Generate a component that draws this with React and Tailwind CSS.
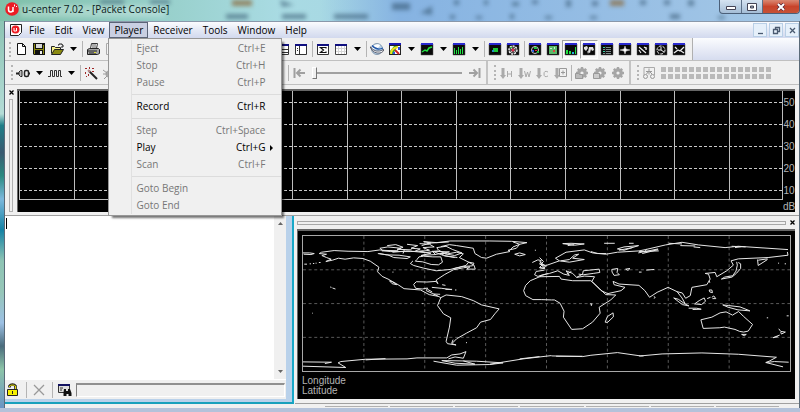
import { useState } from 'react';
import clsx from 'clsx';

const playerMenu = [
  [
    { label: 'Eject', keys: 'Ctrl+E' },
    { label: 'Stop', keys: 'Ctrl+H' },
    { label: 'Pause', keys: 'Ctrl+P' },
  ],
  [{ label: 'Record', keys: 'Ctrl+R', enabled: true }],
  [
    { label: 'Step', keys: 'Ctrl+Space' },
    { label: 'Play', keys: 'Ctrl+G', enabled: true, submenu: true },
    { label: 'Scan', keys: 'Ctrl+F' },
  ],
  [{ label: 'Goto Begin' }, { label: 'Goto End' }],
];

const menus = ['File', 'Edit', 'View', 'Player', 'Receiver', 'Tools', 'Window', 'Help'];

// every toolbar glyph is drawn on a 14x14 grid
const glyphs = {
  new: <path d="M3.5 1.5h5l3 3v8h-8zM8.5 1.5v3h3" fill="#fff" stroke="#111" />,
  save: (
    <>
      <path d="M1 1h12v12H2l-1-1z" fill="#111" />
      <path d="M2 2h1v10H2zM11 3h1v9h-1zM3 7h8v1H3z" fill="#8a8a10" />
      <path d="M4 2h6v4H4z" fill="#d8d8d8" />
      <path d="M8 9h2v3H8z" fill="#eee" />
    </>
  ),
  open: (
    <>
      <path d="M1.5 11.5v-7h3l1 1h5v2" fill="#f5f08a" stroke="#222" />
      <path d="M1.5 12.5l3-5h9l-3 5z" fill="#8a8a10" stroke="#222" />
      <path d="M8 3h1V2h3v1h1v2h-2" fill="none" stroke="#222" />
    </>
  ),
  print: (
    <>
      <path d="M4.5 6.5l1-5h6l-1 5" fill="#fff" stroke="#333" />
      <path d="M6 3h4M6 5h4" stroke="#555" />
      <path d="M1.5 7.5l2-1h9l1 1v4l-2 1h-10z" fill="#a5a5a5" stroke="#222" />
      <path d="M2 9h9M3 11h7" stroke="#222" />
      <path d="M8 10h2v1H8z" fill="#dede30" />
    </>
  ),
  preview: <path d="M2.5 1.5h8v11h-8z" fill="#f4f4f4" stroke="#aaa" />,
  rows: (
    <>
      <path d="M1.5 2.5h11v10h-11z" fill="#fff" stroke="#333" />
      <path d="M1 2h12v2H1z" fill="#101080" />
      <path d="M2 7.5h10M2 10.5h10" stroke="#333" />
    </>
  ),
  split: (
    <>
      <path d="M1.5 2.5h11v10h-11z" fill="#fff" stroke="#333" />
      <path d="M1 2h12v2H1z" fill="#101080" />
      <path d="M5.5 4v8M3 6.5h1M3 8.5h1" stroke="#333" />
    </>
  ),
  sigma: (
    <>
      <path d="M1.5 2.5h11v10h-11z" fill="#fff" stroke="#333" />
      <path d="M1 2h12v2H1z" fill="#101080" />
      <path d="M10 6.500V5.500H4.500L7.500 8 4.500 10.500H10V9.500" fill="none" stroke="#111" strokeWidth="1.200" />
    </>
  ),
  table: (
    <>
      <path d="M1.500 2.500h11v10h-11z" fill="#fff" stroke="#444" />
      <path d="M1 2h12v2H1z" fill="#101080" />
      <path d="M4.500 4v8M7.500 4v8M10.500 4v8M2 6.500h10M2 9.500h10" stroke="#d5d5d5" />
    </>
  ),
  globe: (
    <>
      <circle cx="7" cy="7" r="5.500" fill="#b9d2e8" stroke="#7088a0" strokeWidth=".8" />
      <path d="M2 5q4-4 8-2-1 4-7 4z" fill="#fff" />
      <path d="M0 4.500q5 7.500 14 3-1 4-7 3.500Q2 10 0 4.500z" fill="#f4f8fc" stroke="#334" strokeWidth=".7" />
      <path d="M2 3.500q5 5.500 11 2.500" fill="none" stroke="#2257a8" strokeWidth="1.300" />
    </>
  ),
  map: (
    <>
      <path d="M1 2h12v11H1z" fill="#222" />
      <path d="M2 4h10v8H2z" fill="#fff" />
      <path d="M1 1h12v2H1z" fill="#1818b8" />
      <path d="M2 12V9l4-5h4L8 7l-3 5z" fill="#28a838" />
      <path d="M3 12q0-6 7-7" fill="none" stroke="#f5e020" strokeWidth="2" />
      <path d="M7 8l4 4" stroke="#d02020" strokeWidth="2" />
      <path d="M10 5h2v3h-2zM5 10h2v2H5z" fill="#3050e0" />
    </>
  ),
  connect: (
    <>
      <path d="M0 7.500h3M11 7.500h3" stroke="#222" strokeWidth="2" />
      <path d="M6 4.500H4.500L3 6v3l1.500 1.500H6z" fill="#bbb" stroke="#222" />
      <rect x="8.500" y="4.500" width="4" height="6" rx="1.500" fill="#eee" stroke="#222" strokeWidth="1.500" />
    </>
  ),
  wave: <path d="M0 10.500h2.500v-6h2v6h2v-6h2v6h2v-6h2v6H14" fill="none" stroke="#333" />,
  wand: (
    <>
      <path d="M5 5l8 8" stroke="#222" strokeWidth="2" />
      <path d="M4 4l2 2" stroke="#b88" strokeWidth="2" />
      <path d="M1 2h2v1H1zM5 1h1v2H5zM8 2h2v1H8zM1 6h1v2H1zM8 5h2v1H8zM4 8h1v2H4zM2 10h1v1H2z" fill="#a02828" />
    </>
  ),
  bug: (
    <>
      <circle cx="7" cy="8" r="3.500" fill="#aaa" />
      <path d="M1 4l4 3M1 8h4M2 13l3-3M7 1v4M13 4L9 7M9 8h4M12 13L9 10" stroke="#999" />
    </>
  ),
  toStart: <path d="M2.500 2v10M13 7H5M8.500 3.500L5 7l3.500 3.500" fill="none" stroke="#a0a0a0" strokeWidth="2" />,
  toEnd: <path d="M11.500 2v10M1 7h8M5.500 3.500L9 7l-3.500 3.500" fill="none" stroke="#a0a0a0" strokeWidth="2" />,
  receiver: (
    <>
      <path d="M2 9V1.500h10.500V9" fill="none" stroke="#aaa" />
      <path d="M7 2.500v6M4 5.500h6M4.500 8L7 5l3 3" fill="none" stroke="#999" />
      <circle cx="3.500" cy="10.500" r="2" fill="#f0f0f0" stroke="#999" />
      <circle cx="10.500" cy="10.500" r="2" fill="#f0f0f0" stroke="#999" />
    </>
  ),
};

// black dockable-view glyphs share the blue caption strip
const viewArt = {
  line: <path d="M2 10l3-2 2 1 2-3 3-1" fill="none" stroke="#20e040" strokeWidth="1.500" />,
  hist: <path d="M2 6h1v6H2zM4 8h1v4H4zM6 5h1v7H6zM8 7h1v5H8zM10 5h1v7h-1z" fill="#20e040" />,
  spot: (
    <>
      <path d="M5 6h5v4H5z" fill="#18c838" />
      <path d="M4 8h2v2H4z" fill="#2090c0" />
    </>
  ),
  target: (
    <>
      <circle cx="7" cy="8" r="4" fill="#555" stroke="#e8e8e8" strokeWidth="1.500" strokeDasharray="2 1" />
      <path d="M4 5l6 6M10 5l-6 6" stroke="#ddd" strokeWidth=".8" />
      <circle cx="7" cy="8" r="1.500" fill="#e03050" />
      <path d="M4 5h2v1H4z" fill="#30c040" />
    </>
  ),
  sky: (
    <>
      <circle cx="7" cy="8" r="3.500" fill="none" stroke="#ccc" />
      <path d="M6 5h3v2H6zM9 9h2v2H9z" fill="#20c040" />
      <path d="M4 8h2v2H4z" fill="#3060e0" />
      <path d="M7 8h2v1H7z" fill="#e03030" />
    </>
  ),
  deviation: (
    <>
      <path d="M3 4h8v8H3z" fill="#58b868" />
      <path d="M7 8h2v2H7z" fill="#e04040" />
      <path d="M4 6h2v1H4zM8 5h1v2H8z" fill="#c8f0d0" />
    </>
  ),
  bars: (
    <>
      <path d="M2 8h2v4H2zM5 9h2v3H5zM11 5h1v7h-1z" fill="#20e040" />
      <path d="M8 10h2v2H8z" fill="#20b0e0" />
    </>
  ),
  world: (
    <>
      <path d="M2 5l3-1 1 2-2 3-2-2zM7 5h4l1 3-2 1-1-2-1 4-2-1z" fill="#e0e0e0" />
      <path d="M5 9l1 3 1-2z" fill="#c0c0c0" />
    </>
  ),
  list: (
    <>
      <path d="M3 5.500h8M3 7.500h8M3 9.500h8M3 11.500h8" stroke="#7a8888" />
      <path d="M5.500 4v8" stroke="#222" />
      <path d="M3 5h2v1H3zM3 9h2v1H3z" fill="#30d0a0" />
    </>
  ),
  compass: <path d="M7 4l1 3 4 1-4 1-1 3-1-3-4-1 4-1z" fill="#fff" stroke="#ccc" strokeWidth=".5" />,
  gauge: <path d="M3 5l7 6M3 8l2 3M8 5l3 2M10 5v3" fill="none" stroke="#eee" strokeWidth="1.200" />,
  clock: (
    <>
      <circle cx="7" cy="8" r="4" fill="none" stroke="#eee" strokeDasharray="3 1" />
      <path d="M7 5v3l3 2M4 8h3" fill="none" stroke="#eee" />
    </>
  ),
  plot: <path d="M2 11l4-3 2 1 4-4M3 5l2 2M9 9l3 2" fill="none" stroke="#eee" strokeWidth="1.200" />,
};

const Glyph = ({ name }) => (
  <svg viewBox="0 0 14 14" className="size-3.5 shrink-0" aria-hidden="true">
    {glyphs[name]}
    {viewArt[name] && (
      <>
        <path d="M1 2h12v11H1z" fill="#0a0a0a" stroke="#555" strokeWidth=".5" />
        <path d="M1 1h12v2H1z" fill="#2a2ad0" />
        {viewArt[name]}
      </>
    )}
  </svg>
);

const ToolButton = ({ name, pressed }) => (
  <button
    aria-label={name}
    className={clsx(
      'flex h-[19px] w-[18px] shrink-0 items-center justify-center border',
      pressed ? 'border-white border-t-[#a0a0a0] border-l-[#a0a0a0] bg-[#f9f9f9]' : 'border-transparent'
    )}
  >
    <Glyph name={name} />
  </button>
);

const Arrow = () => (
  <button aria-label="more" className="flex h-[19px] w-3.5 shrink-0 items-center justify-center">
    <svg viewBox="0 0 7 4" className="h-1 w-[7px]">
      <path d="M0 0h7L3.500 4z" fill="#000" />
    </svg>
  </button>
);

const Divider = () => (
  <div className="flex w-1 shrink-0 justify-center">
    <div className="h-4 w-px bg-[#b4b4b4]" />
  </div>
);

const Grip = () => <div className="h-[15px] w-[3px] shrink-0 border-l-2 border-dotted border-[#b5b5b5]" />;

const Toolbar = ({ items }) =>
  items.map((item, i) => {
    if (item === '|') return <Divider key={i} />;
    if (item === 'v') return <Arrow key={i} />;
    return <ToolButton key={i} name={item.replace('*', '')} pressed={item.endsWith('*')} />;
  });

const Logo = ({ className }) => (
  <svg viewBox="0 0 14 14" className={className} aria-hidden="true">
    <circle cx="7" cy="7" r="6.800" fill="#ec1c24" />
    <path d="M3.500 4.500v3q0 2.500 2.200 2.500T8 7.500V5M8 10V5" fill="none" stroke="#fff" strokeWidth="1.500" />
    <path d="M9.500 2.500v2M11.500 4v1" stroke="#fff" />
  </svg>
);

const TitleBar = () => (
  <header className="relative flex h-[21px] shrink-0 items-start overflow-hidden bg-linear-to-r from-[#7fc0a9] via-[#a9dbe3] via-35% to-[#9cc3e6]">
    <div className="absolute inset-0 bg-linear-to-r from-transparent from-40% via-[#86b3e2] via-50% to-[#a5c8e6]" />
    <svg className="absolute inset-0 h-full w-full blur-[2px]" aria-hidden="true">
      <g fill="#30506a" fillOpacity=".55">
        <path d="M100 0h24v4h-24zM150 0h20v4h-20zM226 14h22v5h-22zM282 14h24v5h-24zM334 14h34v5h-34zM280 0l14 5-12 2zM392 3h18v7h-18z" />
        <path d="M454 0h5v5h-5zM484 0h4v5h-4zM512 2h7v4h-7zM532 0h6v4h-6zM566 0h5v7h-5zM592 1h6v5h-6zM640 0h6v5h-6zM664 0h6v5h-6zM688 0h6v6h-6z" />
        <path d="M420 13l12-7v9zM450 15h5v4h-5zM476 16h6v3h-6zM510 14h4v5h-4zM545 16h7v3h-7zM590 16h7v3h-7zM670 14h10v5h-10zM718 16h7v3h-7z" />
      </g>
      <path d="M232 0h20v6h-20zM610 0h14v6h-14z" fill="#8c6a3a" fillOpacity=".7" />
      <path d="M20 5h145v12H20z" fill="#fff" fillOpacity=".25" />
    </svg>
    <Logo className="relative mt-0.5 ml-[5px] size-3.5" />
    <h1 className="relative ml-[3px] flex-1 text-[10px] leading-[18px] text-[#0a1a1a]">u-center 7.02 - [Packet Console]</h1>
    <div className="relative flex h-3.5 w-[81px] overflow-hidden rounded-b border border-t-0 border-[#4b5f78] bg-linear-to-b from-[#d5e3f1] to-[#a4bdd6]">
      <button aria-label="Minimize" className="flex w-[22px] items-center justify-center border-r border-[#5c7088]">
        <svg viewBox="0 0 10 8" className="h-2 w-2.5">
          <path d="M.5 3.500h9v3h-9z" fill="#fff" stroke="#445" />
        </svg>
      </button>
      <button aria-label="Maximize" className="flex w-[21px] items-center justify-center border-r border-[#5c7088]">
        <svg viewBox="0 0 10 8" className="h-2 w-2.5">
          <path d="M.5.500h9v7h-9z" fill="#fff" stroke="#445" />
          <path d="M3.500 3h3v2h-3z" fill="#9ab" stroke="#445" />
        </svg>
      </button>
      <button aria-label="Close" className="flex flex-1 items-center justify-center bg-linear-to-b from-[#d98873] via-[#c8432a] to-[#c65237]">
        <svg viewBox="0 0 10 8" className="h-2 w-2.5">
          <path d="M2 1l6 6M8 1L2 7" stroke="#523" strokeWidth="3.400" />
          <path d="M2 1l6 6M8 1L2 7" stroke="#fff" strokeWidth="2" />
        </svg>
      </button>
    </div>
  </header>
);

const Dropdown = () => (
  <div
    role="menu"
    className="absolute top-full -left-px z-10 w-[174px] border border-[#979797] bg-[#f0f0f0] py-px shadow-[3px_3px_2px_-1px_rgba(0,0,0,0.55)]"
  >
    <div className="ml-[22px] border-l border-[#e0e0e0]">
      {playerMenu.map((group, i) => (
        <div key={i} className={clsx(i > 0 && 'mt-[3px] border-t border-[#dcdcdc] pt-[3px]')}>
          {group.map((item) => (
            <button
              key={item.label}
              role="menuitem"
              disabled={!item.enabled}
              className="flex h-[17px] w-full items-center pr-4 pl-1 text-left text-black disabled:text-[#777]"
            >
              <span className="flex-1">{item.label}</span>
              <span>{item.keys}</span>
              {item.submenu && (
                <svg viewBox="0 0 3 6" className="-mr-2 ml-[5px] h-1.5 w-[3px]">
                  <path d="M0 0l3 3-3 3z" />
                </svg>
              )}
            </button>
          ))}
        </div>
      ))}
    </div>
  </div>
);

const MenuBar = () => {
  const [open, setOpen] = useState('Player');

  return (
    <nav className="flex h-[17px] shrink-0 items-center border-t border-[#8a98aa] bg-linear-to-b from-[#fbfcfe] via-[#e4e9f5] to-[#d2d9ee] pl-[5px]">
      <svg viewBox="0 0 12 12" className="mr-0.5 size-3" aria-hidden="true">
        <path d="M.5.500h11v8l-3 3h-8z" fill="#fff" stroke="#222" />
        <circle cx="5.500" cy="5.500" r="4" fill="#ec1c24" />
        <path d="M4 4v3h2.500V4" fill="none" stroke="#fff" />
      </svg>
      <div className="flex flex-1">
        {menus.map((menu) => (
          <div key={menu} className="relative">
            <button
              onClick={() => setOpen(open === menu ? '' : menu)}
              className={clsx(
                'block h-4 border px-1 leading-[14px]',
                open === menu ? 'border-[#5b6478] bg-[#c9cfe2]' : 'border-transparent'
              )}
            >
              {menu}
            </button>
            {menu === 'Player' && open === menu && <Dropdown />}
          </div>
        ))}
      </div>
      <div className="flex gap-0.5">
        {['M4 9.500h5', 'M5.500 5V3.500h4v4H8M3.500 5.500h4v4h-4z', 'M4 4l5 5M9 4L4 9'].map((d, i) => (
          <button key={d} aria-label={['Minimize', 'Restore', 'Close'][i]} className="size-3.5 border border-[#b9cfe6] bg-[#e6f0fa]">
            <svg viewBox="0 0 12 12" className="size-3">
              <path d={d} fill="none" stroke="#4a5a70" strokeWidth="1.300" />
            </svg>
          </button>
        ))}
      </div>
    </nav>
  );
};

const StartButton = ({ kind }) => (
  <button aria-label={`${kind} start`} disabled className="flex w-[18px] shrink-0 items-center justify-center">
    <svg viewBox="0 0 14 14" className="size-3.5">
      <path d="M2.500 2h3v7h1.500L4 13 1 9h1.500z" fill="#aaa" />
      {kind === 'hot' && <path d="M8.500 5v6M12.500 5v6M8.500 8h4" stroke="#aaa" />}
      {kind === 'warm' && <path d="M7.500 5l1.500 6 1.500-5 1.500 5 1.500-6" fill="none" stroke="#aaa" />}
      {kind === 'cold' && <path d="M13 6q-4-2-4 2t4 2" fill="none" stroke="#aaa" />}
      {kind === 'aiding' && <path d="M6.500 2.500h7v8h-7zM8 6.500h4M10 4.500v4" fill="none" stroke="#999" />}
    </svg>
  </button>
);

const GearButton = ({ kind }) => (
  <button aria-label={`${kind} configuration`} disabled className="flex w-[18px] shrink-0 items-center justify-center">
    <svg viewBox="0 0 14 14" className="size-3.5">
      <path d="M7 1v12M1 7h12M2.800 2.800l8.400 8.400M11.200 2.800l-8.400 8.400" stroke="#a6a6a6" strokeWidth="2.400" />
      <circle cx="7" cy="7" r="3.200" fill="#f0f0f0" stroke="#a6a6a6" strokeWidth="3.200" />
      {kind === 'load' && <path d="M.500 12.500V7.500h3l1 1h3v4z" fill="#bbb" stroke="#999" />}
      {kind === 'save' && <path d="M.500 7.500h6v5h-6z" fill="#ccc" stroke="#999" />}
    </svg>
  </button>
);

const SignalChart = () => {
  const columns = Array.from({ length: 15 }, (_, i) => i);
  const levels = [50, 40, 30, 20, 10];

  return (
    <section className="flex h-[131px] shrink-0 border-b border-[#a0a0a0] bg-[#f0f0f0] pt-1 pb-[3px]">
      <div className="flex w-3 flex-col items-center gap-1 pt-px">
        <CloseMark />
        <div className="w-1 flex-1 border border-[#b0b0b0]" />
      </div>
      <div className="mr-1 flex flex-1 border-t-2 border-l border-[#666] bg-black pl-px">
        <svg viewBox="0 0 764 109" preserveAspectRatio="none" className="h-[109px] min-w-0 flex-1" aria-hidden="true">
          <g fill="none">
            {levels.map((level, i) => (
              <path key={level} d={`M0 ${11.5 + i * 22}h764`} stroke="#c8c8c8" strokeDasharray="3 2" />
            ))}
            {columns.map((c) => (
              <path key={c} d={`M${Math.min(0.5 + Math.round(c * 54.6), 763.5)} 0v109`} stroke="#bdbdbd" />
            ))}
            <path d="M0 108.500h764" stroke="#bdbdbd" />
          </g>
        </svg>
        <div className="w-3 pt-px text-center font-['Liberation_Sans',sans-serif] text-[10px] leading-[22px] text-[#b4b4b4]">
          {levels.map((level) => (
            <div key={level}>{level}</div>
          ))}
          <div className="leading-[10px]">dB</div>
        </div>
      </div>
    </section>
  );
};

const CloseMark = () => (
  <button aria-label="Close panel" className="flex shrink-0">
    <svg viewBox="0 0 5 5" className="size-[5px]">
      <path d="M.5.500l4 4M4.500.500l-4 4" stroke="#000" strokeWidth="1.300" />
    </svg>
  </button>
);

const Console = () => (
  <section className="flex w-[289px] shrink-0 flex-col border-r-2 border-b-2 border-r-[#18a8c8] border-b-[#18a0bc] bg-[#b9d1ea] pr-1.5 pb-[3px]">
    <div className="relative flex flex-1 bg-white">
      <textarea aria-label="Packets" className="min-w-0 flex-1 resize-none bg-white p-1 font-mono outline-none" />
      <div className="absolute top-0.5 left-px h-[11px] w-px bg-black" />
      <div className="flex w-3 flex-col items-center justify-between bg-[#f0f0f0] py-1.5">
        <svg viewBox="0 0 5 3" className="h-[3px] w-[5px]">
          <path d="M0 3h5L2.500 0z" fill="#666" />
        </svg>
        <svg viewBox="0 0 5 3" className="h-[3px] w-[5px]">
          <path d="M0 0h5L2.500 3z" fill="#666" />
        </svg>
      </div>
    </div>
    <div className="flex h-5 items-center gap-1 border-t border-white bg-[#f0f0f0] px-px">
      <button aria-label="Lock" className="shrink-0">
        <svg viewBox="0 0 14 14" className="size-3.5">
          <path d="M3.500 4.500V3q1-1.500 3-1.500T9.500 3v3" fill="none" stroke="#222" strokeWidth="2.600" />
          <path d="M3.500 4V3q1-1 3-1T9.500 3v3" fill="none" stroke="#e8e000" />
          <path d="M1.500 6.500h10v6h-10z" fill="#f5f000" stroke="#222" />
          <path d="M6 8h1v3H6z" fill="#222" />
        </svg>
      </button>
      <Divider />
      <button aria-label="Clear" className="shrink-0">
        <svg viewBox="0 0 14 14" className="size-3.5">
          <path d="M2 2l10 10M12 2L2 12" stroke="#999" strokeWidth="1.300" />
        </svg>
      </button>
      <Divider />
      <button aria-label="Find" className="shrink-0">
        <svg viewBox="0 0 14 14" className="size-3.5">
          <path d="M.5 1.500h11v8H.5z" fill="#ddd" stroke="#333" />
          <path d="M0 1h12v2H0z" fill="#111160" />
          <path d="M2 5h3M2 7h2" stroke="#333" />
          <path d="M6 6h2v2h2V6h2l1.500 4v3h-3v-2h-2v2h-3v-3z" fill="#111" />
        </svg>
      </button>
      <input
        aria-label="Filter"
        className="h-3.5 min-w-0 flex-1 border border-t-2 border-white border-t-[#909090] border-l-[#808080] bg-[#f0f0f0] px-1 outline-none"
      />
    </div>
  </section>
);

const WorldMap = () => (
  <svg viewBox="0 0 1470 408" preserveAspectRatio="none" className="min-h-0 w-full flex-1 border border-[#a8a8a8]" aria-label="World map">
    <g fill="none" stroke="#5a5a5a" strokeWidth="3" strokeDasharray="9 8">
      {[1, 2, 3, 4, 5, 6, 7].map((n) => (
        <path key={n} d={`M${n * 183.75} 0v408`} />
      ))}
      {[1, 2, 3].map((n) => (
        <path key={n} d={`M0 ${n * 102}h1470`} />
      ))}
    </g>
    <g fill="none" stroke="#e8e8e8" strokeWidth="3" strokeLinejoin="round">
      <g transform="translate(-36 -75)">
        <path d="M36 126h20l14 2-10 3-22-1M40 160h8M56 159h4M66 158h4M74 157h3M84 155h5M118 229l4 1M125 232l9 3M64 308h2M306 184h3M396 279h3M528 397h3" />
        <path d="M400 120l-40 2-60 0-32-5-36 5-60-1-42-2-38 5-7 4 22 2-14 4 14 6 14 5-16 7 20-4 18-6 20 3 26-4 28 2 22 8 26 18-4 14 14 14 22 10 22 15-14-3-8-9 10 3 16 9 18 12 50 4 26 14 26 5" />
        <path d="M452 261l-24-12-20-9 4-8-16 3-20-2-6-12 8-8 32 1 28-2 5 7-5-11 26-17 26-14 30-6 20-3-10 7 26 0-4-12-18-10-26-13 12-11-20-5-28 5-20-2 12 8 30 5" />
        <path d="M368 150l-8 8 10 6 30 8 38 8 42-4 40-9 28-2 4-8-16-3-8 10-24 6-16 4M380 146l6-8 14-2 28 2 24 0 5 16-12 8-22-1-26-8-22-2z" />
        <path d="M262 128l30 4 18 8 40 3 10-5-34-5-38-1-22-4M268 112l24-4 40 4-14 8-42-2zM290 104l26-3 22 8-18 6 44 2M350 100l32 4-20 8 28 2-18 8M388 98l30 2 14 8-34 2 20 8-30 4 34 5-30 7 44-3-10-10 52 2-44 8M400 92l22 4-28 8M440 110l28-4 20 10 28 10-22 8-28-5-22-12zM430 122l30 12 42 6M306 124l46-4 54 5 38-5M274 120l46 0M342 116l-4 12" />
        <path d="M400 92l40 3 40-5 120 0 65 1 47 4-22 5-10 12-25 6 5 4-40 8-30 12-15-2-20-12-5-16-50-8-22-3-26 6M410 97l66-4M670 93l20 7-20 8-12 12" />
        <path d="M425 230l30 3 30 4M456 222l10 2M466 236l20 0M495 238h4M412 236l14 8M430 250l20 1" />
        <path d="M452 261l16-8 47 5 35 12 25 13 53 12-13 15-13 17-30 8-12 17-30 16-30 17-15 15 13 4-26-4-4-7 10-43 4-28-22-12-18-25zM485 398l4-10" />
        <path d="M675 130l15-4 17 5-17 4zM736 118h3M728 155l17-8 10 2-4 10 14 8M750 152l18 14-4 6-14-2 10-10M735 192l5-10 25-4M735 192l10 5 30-9" />
        <path d="M755 196l-33 14-14 14-6 16 6 15 22 12 25 0 31 1" />
        <path d="M36 455l86 1-20 4M36 468l129 4-23-14 8-4 75-7 125-1 30-3 90 0 15-9 25-3 18-7-8 20-25-4-20 6M225 449l60-4M430 453l70 12 100-2 40-5-80-5-105-2 40 8 60 3-35-10M600 462l100-16 86-10M690 446l60-7" />
      </g>
      <g transform="translate(714 -75)">
        <path d="M36 268l9 0 17 10 12 24-2 18 25 37 33-2 30-20 23-27-3-18 35-22 15-15-30-1-20-19-25-23-55 0-35-5-5-8-60 1M152 280l6 0-2 6" />
        <path d="M0 195l30-7 25-8 18 10 17 4-10-14 20 8 12 12 18-10 2-10 48-5 2 10-20 3-30 4-14-2M82 190l14-8M112 200l24-4 30 2-8 14 28 28 20 9 40-9 12-10-33-8-3-10 18 8 60 4 18 16 14 20 23-15 33-15 27 13 15 19 10 18M345 258l4 2-3 4M415 243l16 4 10 16 14-8 5-25 45-8 10-17-5-15-10-2 30-3 5 13 30-18 20-17-7-13 22-6 90-4 60-7-2-10" />
        <path d="M0 140l12 12-8 8 12 14-16-3M0 160l20 4 40-14-12-8 32-18 55-7 25 9 40 4 35-6 65-4 20-4 60-14 50-8 50 8 80 8 40-4 150 10M60 150l30 4 45-8-35-4 18-12-12 2-16 14-26 4M155 122l20 6 26 0M300 122l60-2M298 126l60-12M310 128l48-12M318 126l4-12" />
        <path d="M70 98l35 5 30-4-40-2zM85 104l20-3M195 97h32M235 114l20 4 44-14-44 4zM240 118l40-8M390 97l40 2M425 104l45 1M465 108l20 2M580 106l42 2M590 110l20-3M270 97h14" />
        <path d="M218 176l18-3-2 12 7 7-16 2-6-10zM260 175l13-2-6 6zM322 178l24-2M300 184h8M658 146l2 18 28-18M720 157h3M740 159h4M660 148l28-4" />
        <path d="M600 155l7 4 0 14-12 14-14 12-32 6 10-6 24-4 10-14 4-18-2-10M512 210l2 6M512 238l8 0 2 8-8-2zM520 260l6-4 6 8-10 0M405 262l14 4 20 14 12 6-20-4zM468 280l14-10 15-8 4 10-12 10zM450 293l24 0 14 3-26 1M506 264l10-4M553 283l18 2 34 4 30 12-36-3-30-8z" />
        <path d="M487 328l33-8 25-13 18-3 20 10 4-3 14-8 14 14 28 25-13 20-14 3-12-2-14-6-32-7-14 2-50 2zM610 372l14 0-6 4zM722 355l6 8 14 2-12 6-2-6M725 374l-20 8 14-3M686 322h4M746 316h6M198 335l7-17 17-11 1 12-18 17z" />
        <path d="M36 437l94 2 25-4 80-8 70 10 65-6 120-3 110 4 115 9-22 12-10 4 52 13M683 457l26-3 43 2M300 437l14 0M50 438l80 0" />
      </g>
    </g>
  </svg>
);

const MapPanel = () => (
  <section className="flex min-w-0 flex-1 flex-col border-b border-[#a0a0a0] bg-[#f0f0f0] pr-1 pb-1 pl-0.5">
    <div className="flex h-[13px] items-center gap-1">
      <div className="h-1 flex-1 border border-[#a8a8a8]" />
      <CloseMark />
    </div>
    <div className="flex min-h-[150px] flex-1 flex-col border-t-2 border-l border-[#666] bg-black pt-1 pr-1 pl-1">
      <WorldMap />
      <div className="h-[27px] pt-1 font-['Liberation_Sans',sans-serif] text-[10px] leading-[10px] text-[#b4b4b4]">
        <div>Longitude</div>
        <div>Latitude</div>
      </div>
    </div>
  </section>
);

const App = () => (
  <div className="flex min-h-screen flex-col bg-[#b4c2da] font-['Open_Sans','Noto_Sans',sans-serif] text-[10px] text-black">
    <TitleBar />
    <div className="flex flex-1">
      <div className="w-1 shrink-0 bg-[linear-gradient(#8cc4b4,#b4dcd6_24%,#1f7f88_27%,#3a5a70_34%,#2a8a80_40%,#7cb8dc_46%,#1482a4_54%,#8ec4b4_62%,#96c6b8_70%,#9cc0e4_78%,#4a6c7c_84%,#8cc4a8_90%,#6c94c4)]" />
      <main className="flex min-w-0 flex-1 flex-col border-x border-[#5a6a78] bg-[#f0f0f0]">
        <MenuBar />

        <div className="flex h-[23px] shrink-0 border-b border-[#c0c0c0] bg-linear-to-b from-[#fbfcfe] to-[#d6dcef]">
          <div className="flex items-center border-r border-[#b0b0b0] bg-[#f0f0f0] pr-1 pl-1">
            <Grip />
            <Toolbar
              items={[
                'new', 'save', 'open', 'v', '|', 'print', 'preview',
                'rows', 'rows', 'rows', 'rows', 'rows', 'rows', 'rows', 'v', 'v',
                'rows', 'split', '|', 'sigma', 'table', 'v', '|', 'globe', 'map', 'v', 'line', 'v', 'hist', 'v', '|',
                'spot', 'target', '|', 'sky', 'deviation', 'bars*', 'world*', 'list', 'compass', 'gauge', 'clock', 'plot',
              ]}
            />
          </div>
        </div>

        <div className="flex h-6 shrink-0 border-b border-[#c0c0c0]">
          <div className="flex w-[483px] shrink-0 items-center border-r-2 border-[#c4c4c4] pr-0.5 pl-1.5">
            <Grip />
            <Toolbar items={['connect', 'v', 'wave', 'v', '|', 'wand', 'bug']} />
            <div className="flex-1" />
            <Divider />
            <ToolButton name="toStart" />
            <input
              type="range"
              aria-label="Position"
              defaultValue="0"
              disabled
              className="mx-1 h-4 w-[150px] appearance-none bg-[linear-gradient(#a0a0a0,#a0a0a0)] bg-size-[100%_2px] bg-center bg-no-repeat [&::-webkit-slider-thumb]:h-3 [&::-webkit-slider-thumb]:w-[5px] [&::-webkit-slider-thumb]:appearance-none [&::-webkit-slider-thumb]:border [&::-webkit-slider-thumb]:border-white [&::-webkit-slider-thumb]:border-r-[#777] [&::-webkit-slider-thumb]:border-b-[#777] [&::-webkit-slider-thumb]:bg-[#f0f0f0]"
            />
            <ToolButton name="toEnd" />
          </div>
          <div className="flex shrink-0 items-center border-r-2 border-[#c4c4c4] pr-0.5 pl-1.5">
            <Grip />
            <StartButton kind="hot" />
            <StartButton kind="warm" />
            <StartButton kind="cold" />
            <StartButton kind="aiding" />
            <Divider />
            <GearButton kind="load" />
            <GearButton kind="save" />
            <GearButton kind="apply" />
          </div>
          <div className="flex items-center pl-1.5">
            <Grip />
            <ToolButton name="receiver" />
            <div className="ml-[3px] grid grid-cols-16 gap-0.5">
              {Array.from({ length: 32 }, (_, i) => (
                <div key={i} className="size-[5px] bg-[#bababa]" />
              ))}
            </div>
          </div>
        </div>

        <SignalChart />

        <div className="flex flex-1 gap-px">
          <Console />
          <MapPanel />
        </div>

        <footer className="flex h-1 shrink-0 gap-0.5 bg-[#f0f0f0] pr-5 pl-80">
          {[1, 2, 3, 4, 5, 6, 7].map((n) => (
            <div key={n} className="mt-0.5 flex-1 border-t border-[#b0b0b0]" />
          ))}
        </footer>
      </main>
    </div>
    <div className="h-1 shrink-0 bg-[#b4c2da]" />
  </div>
);

export default App;
